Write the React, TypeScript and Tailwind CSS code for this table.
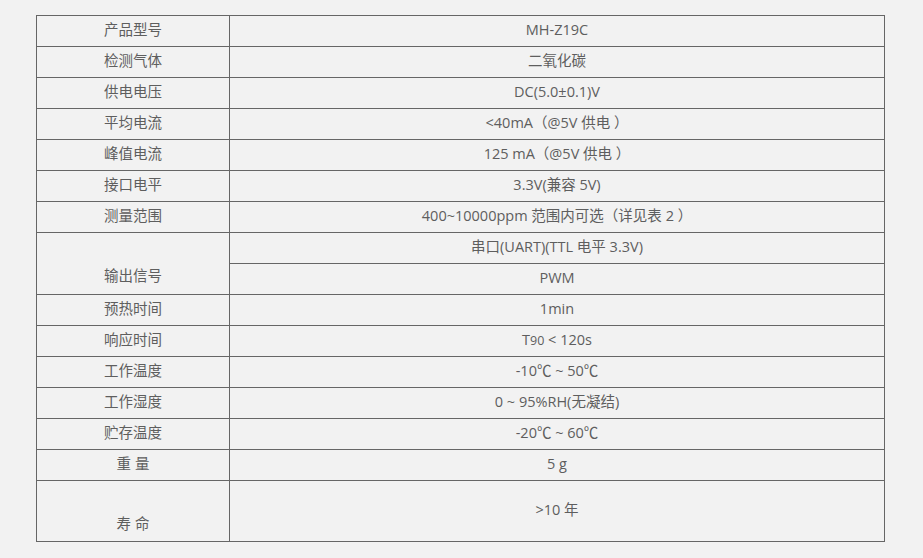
import React from "react";

interface Row {
  label: string;
  value: React.ReactNode;
}

const rowsTop: Row[] = [
  { label: "产品型号", value: "MH-Z19C" },
  { label: "检测气体", value: "二氧化碳" },
  { label: "供电电压", value: "DC(5.0±0.1)V" },
  { label: "平均电流", value: "<40mA（@5V 供电 ）" },
  { label: "峰值电流", value: "125 mA（@5V 供电 ）" },
  { label: "接口电平", value: "3.3V(兼容 5V)" },
  { label: "测量范围", value: "400~10000ppm 范围内可选（详见表 2 ）" },
];

const rowsBottom: Row[] = [
  { label: "预热时间", value: "1min" },
  {
    label: "响应时间",
    value: (
      <>
        T<span className="text-[12.5px]">90</span> &lt; 120s
      </>
    ),
  },
  { label: "工作温度", value: "-10℃ ~ 50℃" },
  { label: "工作湿度", value: "0 ~ 95%RH(无凝结)" },
  { label: "贮存温度", value: "-20℃ ~ 60℃" },
  { label: "重 量", value: "5 g" },
];

const cell = "border border-[#666] text-center align-middle p-0 pb-[2px] h-[31px]";

const App: React.FC = () => {
  return (
    <div
      className="min-h-[558px] bg-[#f2f2f2] pl-[36px] pt-[15px] text-[14.5px] text-[#5e5e5e]"
      style={{ fontFamily: '"Open Sans", "Noto Sans CJK SC", sans-serif' }}
    >
      <table className="w-[849px] table-fixed border-collapse">
        <colgroup>
          <col className="w-[193px]" />
          <col />
        </colgroup>
        <tbody>
          {rowsTop.map((r) => (
            <tr key={r.label}>
              <td className={cell}>{r.label}</td>
              <td className={cell}>{r.value}</td>
            </tr>
          ))}
          <tr>
            <td rowSpan={2} className="border border-[#666] text-center align-bottom p-0 pb-[7px]">
              输出信号
            </td>
            <td className={cell}>串口(UART)(TTL 电平 3.3V)</td>
          </tr>
          <tr>
            <td className={cell}>PWM</td>
          </tr>
          {rowsBottom.map((r) => (
            <tr key={r.label}>
              <td className={cell}>{r.label}</td>
              <td className={cell}>{r.value}</td>
            </tr>
          ))}
          <tr>
            <td className="border border-[#666] text-center align-bottom p-0 pb-[6px] h-[61px]">寿 命</td>
            <td className="border border-[#666] text-center align-middle p-0 pb-[2px] h-[61px]">&gt;10 年</td>
          </tr>
        </tbody>
      </table>
    </div>
  );
};

export default App;
